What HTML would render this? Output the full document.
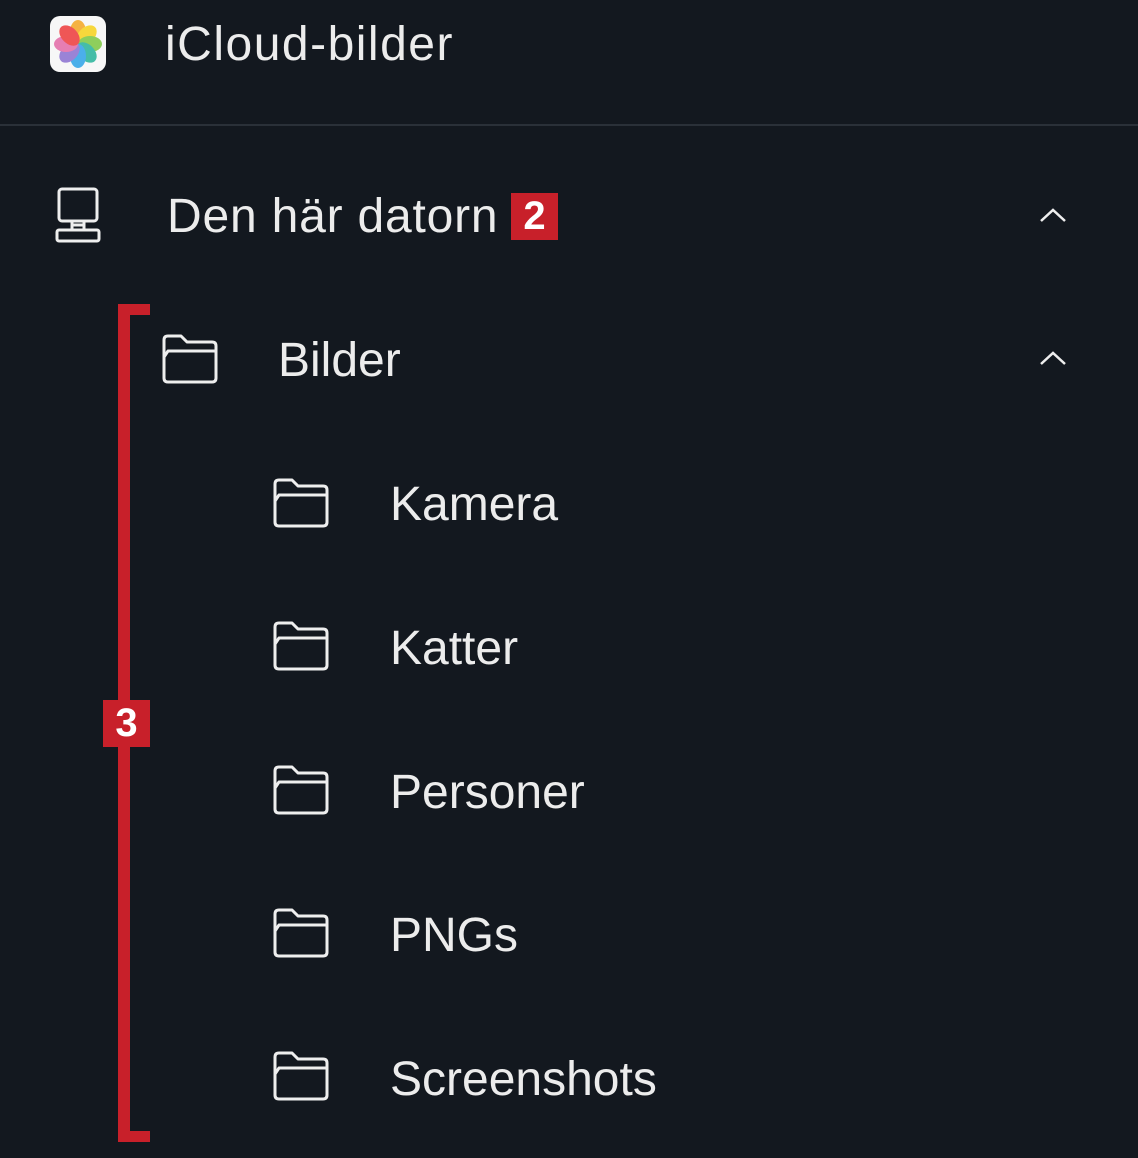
<!DOCTYPE html>
<html><head><meta charset="utf-8"><style>
html,body{margin:0;padding:0;}
body{width:1138px;height:1158px;background:#13181f;position:relative;overflow:hidden;font-family:"Liberation Sans",sans-serif;color:#ececec;}
.t{position:absolute;font-size:48px;line-height:48px;white-space:nowrap;}
.ab{position:absolute;}
.badge{position:absolute;width:47px;height:47px;background:#c8202a;color:#fff;font-weight:bold;font-size:40px;line-height:47px;text-align:center;}
</style></head><body>
<!-- photos icon -->
<svg class="ab" style="left:49px;top:15px" width="58" height="58" viewBox="0 0 58 58">
<rect x="1" y="1" width="56" height="56" rx="10" fill="#f7f7f7"/>
<g transform="translate(29,29)" opacity="0.85">
<ellipse cx="0" cy="-12" rx="8" ry="12" fill="#f5a623"/>
<ellipse cx="0" cy="-12" rx="8" ry="12" fill="#f8d21c" transform="rotate(45)"/>
<ellipse cx="0" cy="-12" rx="8" ry="12" fill="#7cc741" transform="rotate(90)"/>
<ellipse cx="0" cy="-12" rx="8" ry="12" fill="#27b39a" transform="rotate(135)"/>
<ellipse cx="0" cy="-12" rx="8" ry="12" fill="#2ea3e8" transform="rotate(180)"/>
<ellipse cx="0" cy="-12" rx="8" ry="12" fill="#8a6fd1" transform="rotate(225)"/>
<ellipse cx="0" cy="-12" rx="8" ry="12" fill="#e46aa6" transform="rotate(270)"/>
<ellipse cx="0" cy="-12" rx="8" ry="12" fill="#ee3b3b" transform="rotate(315)"/>
</g></svg>
<div class="t" style="left:165px;top:21px;letter-spacing:1.5px">iCloud-bilder</div>
<div class="ab" style="left:0;top:124px;width:1138px;height:2px;background:#2a3038"></div>
<!-- computer -->
<svg class="ab" style="left:54px;top:186px" width="48" height="58" viewBox="0 0 48 58" fill="none" stroke="#eee" stroke-width="3">
<rect x="5" y="3" width="38" height="32" rx="3"/>
<path d="M18 35 V43 M30 35 V43 M18 39 H30"/>
<rect x="3" y="44" width="42" height="11" rx="2"/>
</svg>
<div class="t" style="left:167px;top:193px;letter-spacing:0.8px">Den här datorn</div>
<div class="badge" style="left:511px;top:193px">2</div>
<svg class="ab" style="left:1038px;top:205px" width="30" height="20" viewBox="0 0 30 20" fill="none" stroke="#eee" stroke-width="2.5"><path d="M3 16 L15 5 L27 16"/></svg>
<svg class="ab" style="left:1038px;top:348px" width="30" height="20" viewBox="0 0 30 20" fill="none" stroke="#eee" stroke-width="2.5"><path d="M3 16 L15 5 L27 16"/></svg>
<!-- bracket -->
<div class="ab" style="left:118px;top:304px;width:12px;height:838px;background:#c8202a"></div>
<div class="ab" style="left:118px;top:304px;width:32px;height:11px;background:#c8202a"></div>
<div class="ab" style="left:118px;top:1131px;width:32px;height:11px;background:#c8202a"></div>
<div class="badge" style="left:103px;top:700px">3</div>
<!-- folders -->
<svg width="0" height="0" style="position:absolute"><defs>
<symbol id="f" viewBox="0 0 58 52"><g fill="none" stroke="#eee" stroke-width="3" stroke-linejoin="round">
<path d="M3 7 Q3 3 7 3 H20 L26 9 H51 Q55 9 55 13 V45 Q55 49 51 49 H7 Q3 49 3 45 Z"/>
<path d="M3 24 L7 18 H55"/></g></symbol></defs></svg>
<svg class="ab" style="left:161px;top:333px" width="58" height="52"><use href="#f"/></svg>
<div class="t" style="left:278px;top:337px">Bilder</div>
<svg class="ab" style="left:272px;top:477px" width="58" height="52"><use href="#f"/></svg>
<div class="t" style="left:390px;top:481px">Kamera</div>
<svg class="ab" style="left:272px;top:620px" width="58" height="52"><use href="#f"/></svg>
<div class="t" style="left:390px;top:625px">Katter</div>
<svg class="ab" style="left:272px;top:764px" width="58" height="52"><use href="#f"/></svg>
<div class="t" style="left:390px;top:769px">Personer</div>
<svg class="ab" style="left:272px;top:907px" width="58" height="52"><use href="#f"/></svg>
<div class="t" style="left:390px;top:912px">PNGs</div>
<svg class="ab" style="left:272px;top:1050px" width="58" height="52"><use href="#f"/></svg>
<div class="t" style="left:390px;top:1056px">Screenshots</div>
</body></html>
